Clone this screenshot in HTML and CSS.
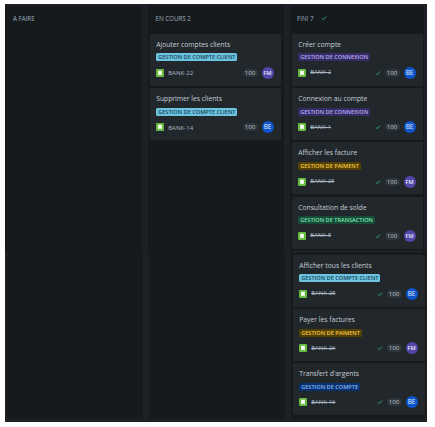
FILE: index.html
```
<!DOCTYPE html>
<html lang="fr">
<head>
<meta charset="utf-8">
<title>Tableau</title>
<link rel="stylesheet" href="styles.css">
</head>
<body>
<svg width="0" height="0" class="defs">
  <symbol id="story" viewBox="0 0 8 8"><rect width="8" height="8" rx="1" fill="#63ba3c"/><path d="M2.2 1.8h3.6v4.7L4 5.5 2.2 6.5z" fill="#fff"/></symbol>
  <symbol id="check" viewBox="0 0 6 6"><path d="M.8 3.3 2.3 4.7 5.2 1.5" fill="none" stroke="#2c9f70" stroke-width="1"/></symbol>
</svg>
<main class="board">
  <section class="panel top">
    <div class="column"><h2><span>A FAIRE</span></h2></div>
    <div class="column">
      <h2><span>EN COURS 2</span></h2>
      <article class="card"><h3>Ajouter comptes clients</h3><span class="tag cyan">GESTION DE COMPTE CLIENT</span><footer><svg class="story"><use href="#story"/></svg><span class="key">BANK-22</span><span class="points">100</span><span class="avatar fm">FM</span></footer></article>
      <article class="card"><h3>Supprimer les clients</h3><span class="tag cyan">GESTION DE COMPTE CLIENT</span><footer><svg class="story"><use href="#story"/></svg><span class="key">BANK-14</span><span class="points">100</span><span class="avatar be">BE</span></footer></article>
    </div>
    <div class="column done">
      <h2><span>FINI 7</span><svg class="check"><use href="#check"/></svg></h2>
      <article class="card"><h3>Créer compte</h3><span class="tag purple">GESTION DE CONNEXION</span><footer><svg class="story"><use href="#story"/></svg><span class="key"><s>BANK-2</s></span><svg class="check"><use href="#check"/></svg><span class="points">100</span><span class="avatar be">BE</span></footer></article>
      <article class="card"><h3>Connexion au compte</h3><span class="tag purple">GESTION DE CONNEXION</span><footer><svg class="story"><use href="#story"/></svg><span class="key"><s>BANK-1</s></span><svg class="check"><use href="#check"/></svg><span class="points">100</span><span class="avatar be">BE</span></footer></article>
      <article class="card"><h3>Afficher les facture</h3><span class="tag yellow">GESTION DE PAIMENT</span><footer><svg class="story"><use href="#story"/></svg><span class="key"><s>BANK-25</s></span><svg class="check"><use href="#check"/></svg><span class="points">100</span><span class="avatar fm">FM</span></footer></article>
      <article class="card"><h3>Consultation de solde</h3><span class="tag green">GESTION DE TRANSACTION</span><footer><svg class="story"><use href="#story"/></svg><span class="key"><s>BANK-8</s></span><svg class="check"><use href="#check"/></svg><span class="points">100</span><span class="avatar fm">FM</span></footer></article>
      <article class="card"></article>
    </div>
  </section>
  <section class="panel bottom">
    <div class="column"></div>
    <div class="column"></div>
    <div class="column done">
      <article class="card"><h3>Afficher tous les clients</h3><span class="tag cyan">GESTION DE COMPTE CLIENT</span><footer><svg class="story"><use href="#story"/></svg><span class="key"><s>BANK-28</s></span><svg class="check"><use href="#check"/></svg><span class="points">100</span><span class="avatar be">BE</span></footer></article>
      <article class="card"><h3>Payer les factures</h3><span class="tag yellow">GESTION DE PAIMENT</span><footer><svg class="story"><use href="#story"/></svg><span class="key"><s>BANK-26</s></span><svg class="check"><use href="#check"/></svg><span class="points">100</span><span class="avatar fm">FM</span></footer></article>
      <article class="card"><h3>Transfert d'argents</h3><span class="tag blue">GESTION DE COMPTE</span><footer><svg class="story"><use href="#story"/></svg><span class="key"><s>BANK-16</s></span><svg class="check"><use href="#check"/></svg><span class="points">100</span><span class="avatar be">BE</span></footer></article>
    </div>
  </section>
</main>
</body>
</html>
```
FILE: styles.css
```
* { box-sizing: border-box; }
body {
  margin: 0;
  padding: 4px 0 0 5px;
  background: #fff;
  font-family: "Open Sans", "Noto Sans", sans-serif;
}
.defs { display: block; height: 0; }
.board { width: 422px; height: 418px; background: #1d2125; }
.panel { display: grid; overflow: hidden; }
.top { height: 248px; padding-top: 2px; grid-template-columns: 136.5px 136px 134px; column-gap: 6px; }
.bottom { height: 170px; padding: 0 0 3px 2px; grid-template-columns: 136px 136px 135px; column-gap: 6px; }
.column {
  display: flex;
  flex-direction: column;
  gap: 2.1px;
  padding: 0 2.5px;
  background: #161a1d;
  min-width: 0;
}
.top .column { border-radius: 3px 3px 0 0; }
.bottom .column { border-radius: 0 0 3px 3px; padding-top: 2.5px; }
.top .done { padding: 0 1px 0 2px; }
.bottom .done { padding-left: 1.5px; padding-right: 1.5px; }
h2 {
  display: flex;
  align-items: center;
  gap: 8px;
  height: 25.6px;
  margin: 0;
  padding: 0 0 1px 5.5px;
  font-size: 6.2px;
  font-weight: 500;
  color: #9fadbc;
}
.card {
  flex: none;
  height: 52.2px;
  padding: 6px 5.5px 0 6.2px;
  border-radius: 1.5px;
  background: #22272b;
}
h3 {
  margin: 0 0 3.8px;
  font-size: 6.75px;
  line-height: 10px;
  font-weight: 400;
  color: #c3ced9;
  white-space: nowrap;
}
.done h3 { padding-left: .5px; }
.tag {
  display: block;
  width: max-content;
  height: 8px;
  padding: 0 2px;
  border-radius: 1.5px;
  font-size: 5.6px;
  line-height: 8px;
  font-weight: 600;
  white-space: nowrap;
}
.cyan { background: #6cc3e0; color: #164555; }
.purple { background: #352c63; color: #b8acf6; }
.yellow { background: #533f04; color: #f5cd47; }
.green { background: #164b35; color: #7ee2b8; }
.blue { background: #09326c; color: #85b8ff; }
.done .tag { margin-left: .5px; }
footer { display: flex; align-items: center; height: 13px; margin-top: 5px; }
.story { width: 8px; height: 8px; margin-right: 4px; }
.done .story { margin-left: .5px; }
.key { flex: 1; font-size: 6.1px; line-height: 9px; font-weight: 500; color: #a9b6c3; }
.done .key { font-size: 5.9px; }
s { text-decoration-thickness: .6px; }
.check { width: 6px; height: 6px; }
footer .check { margin-right: 4px; }
.points {
  width: 15px;
  height: 8px;
  border-radius: 4px;
  background: #2e353b;
  color: #c3ced9;
  font-size: 6.1px;
  line-height: 8px;
  text-align: center;
}
.avatar {
  width: 12px;
  height: 12px;
  margin-left: 4px;
  margin-right: 2px;
  border-radius: 50%;
  color: #e4e8fa;
  font-size: 5.6px;
  line-height: 12px;
  font-weight: 600;
  text-align: center;
}
.done .avatar { margin-right: 1.5px; }
.be { background: #0c55cc; font-size: 6.4px; font-weight: 500; }
.fm { background: #5446a8; }
```
